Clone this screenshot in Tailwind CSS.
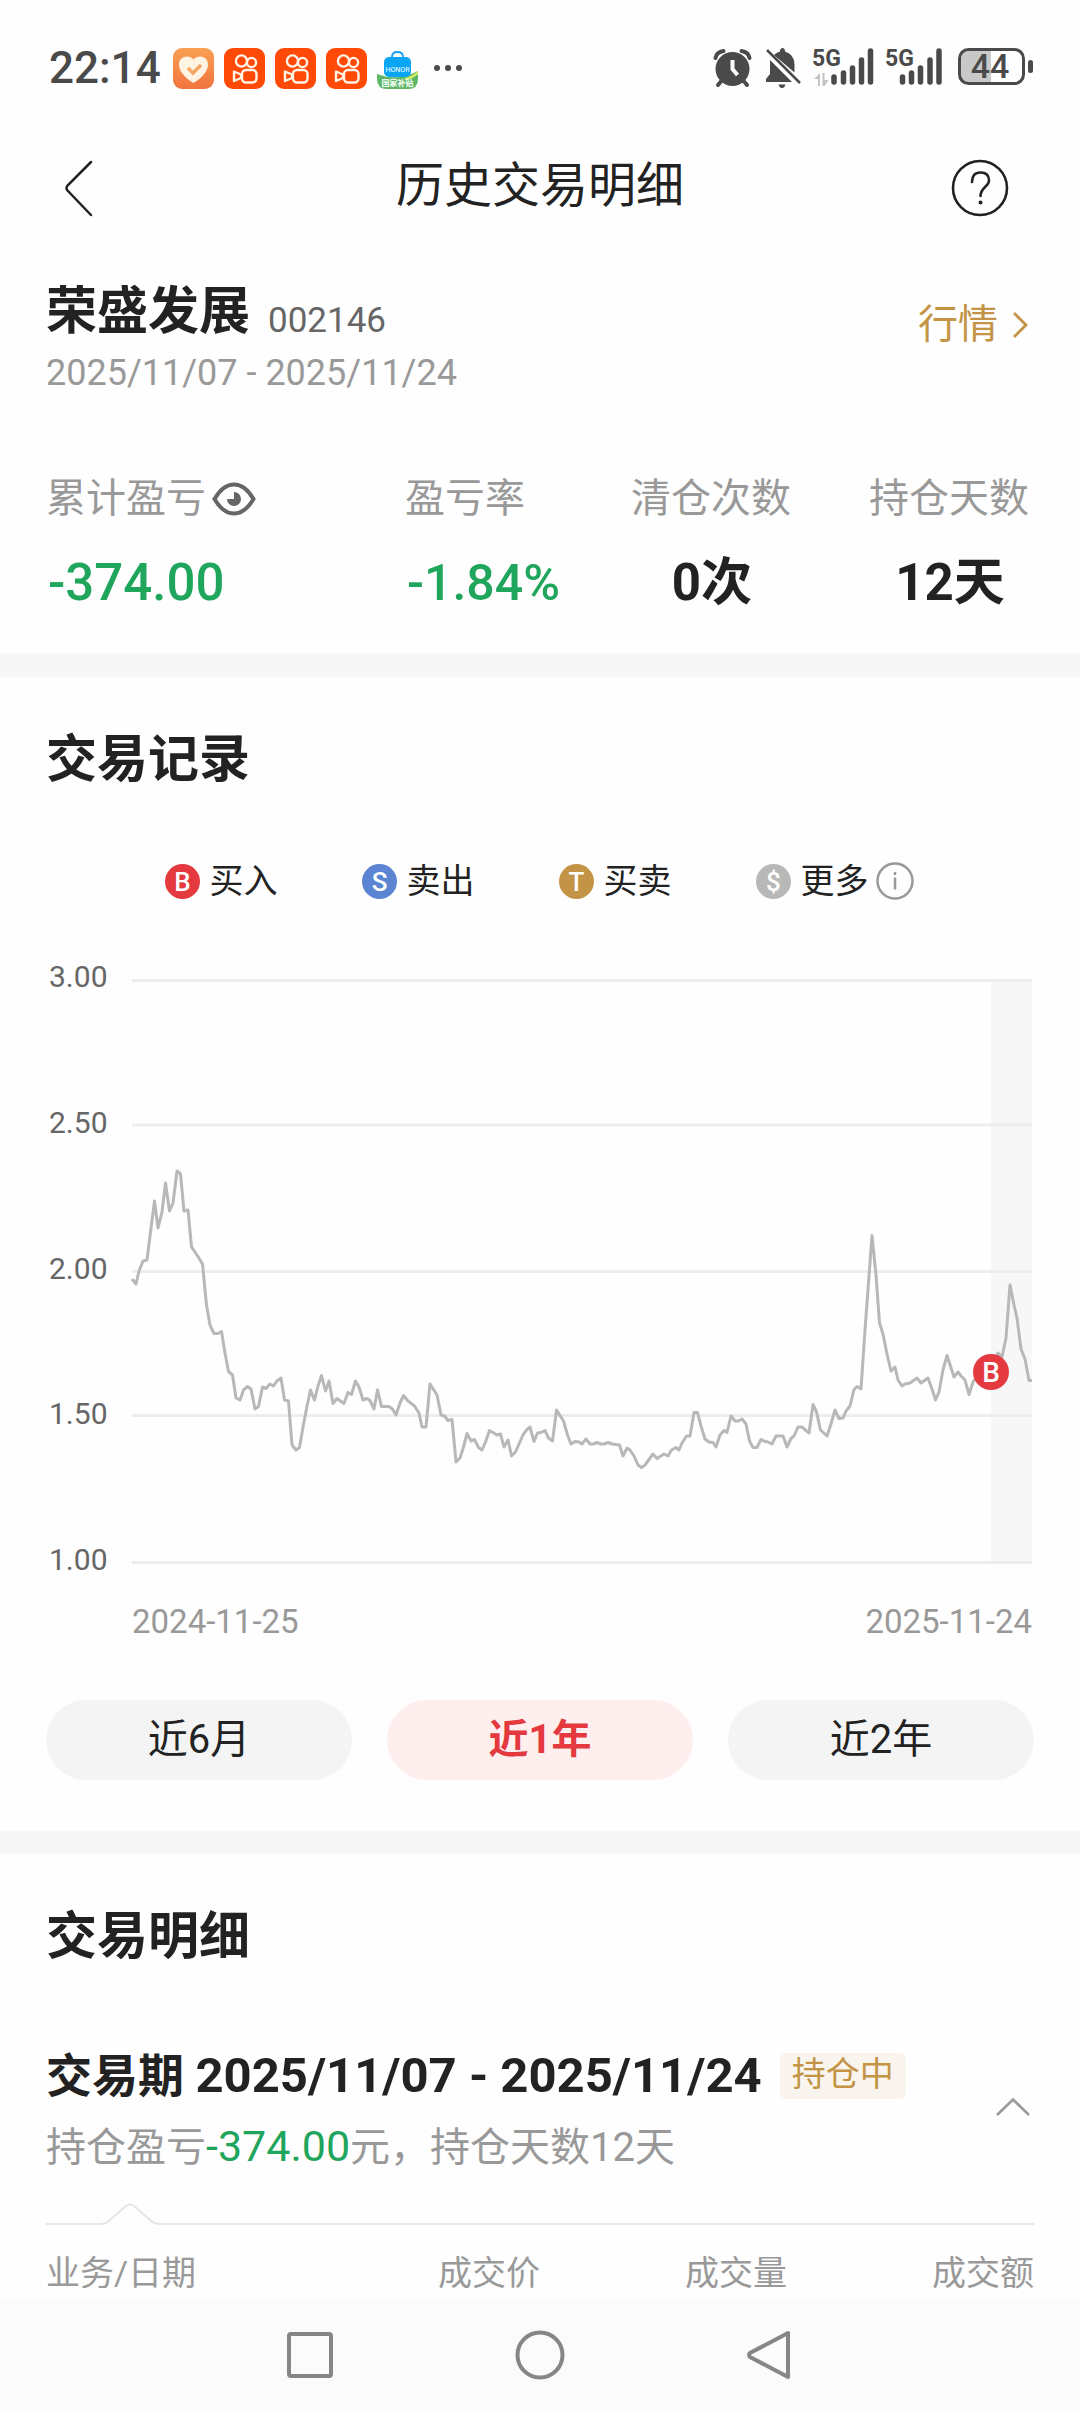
<!DOCTYPE html>
<html lang="zh-CN">
<head>
<meta charset="utf-8">
<meta name="viewport" content="width=device-width, initial-scale=1">
<title>历史交易明细</title>
<script src="https://cdn.jsdelivr.net/npm/@tailwindcss/browser@4"></script>
</head>
<body class="min-h-screen flex flex-col bg-[#fefefe] text-[#222] font-[Roboto,'Noto_Sans_CJK_SC',sans-serif]">

<svg class="hidden">
  <defs>
    <symbol id="camera" viewBox="0 0 41 41">
      <rect width="41" height="41" rx="9" fill="#ff4906"/>
      <g fill="none" stroke="#fff3e6" stroke-width="2.4" stroke-linejoin="round">
        <circle cx="17.500" cy="13" r="5.600"/><circle cx="27.500" cy="14.500" r="4.600"/>
        <rect x="18" y="22" width="14.500" height="12.500" rx="4"/>
        <path d="M10 23.500v9.500l7-3v-3.500z"/>
      </g>
    </symbol>
  </defs>
</svg>

<!-- status bar -->
<div class="flex items-center justify-between h-[136px] pl-[49px] pr-[46px] text-[#4a4a4a]">
  <div class="flex items-center gap-[10px]">
    <span class="text-[44px] leading-[48px] font-medium mr-[2px]">22:14</span>
    <svg class="size-[41px]" viewBox="0 0 41 41">
      <defs><linearGradient id="peach" x2="0" y2="1"><stop stop-color="#f9a052"/><stop offset="1" stop-color="#f1743f"/></linearGradient></defs>
      <rect width="41" height="41" rx="9" fill="url(#peach)"/>
      <path d="M20.500 35C12 30 6 23 6 16.500 6 8 16 6 20.500 11.500 25 6 35 8 35 16.500 35 23 29 30 20.500 35z" fill="#fff3e4"/>
      <path d="M15 20l5 5 8-8" fill="none" stroke="#f4a765" stroke-width="3.500"/>
    </svg>
    <svg class="size-[41px]"><use href="#camera"/></svg>
    <svg class="size-[41px]"><use href="#camera"/></svg>
    <svg class="size-[41px]"><use href="#camera"/></svg>
    <svg class="size-[41px]" viewBox="0 0 41 41">
      <path d="M0 26q20 8 41-3v8q0 10-10 10H10Q0 41 0 31z" fill="#5cb865"/>
      <path d="M28 30q8-2 13-7v3q-5 5-13 6z" fill="#d9ef6a"/>
      <path d="M15 11V9q0-5 5.500-5T26 9v2" fill="none" stroke="#1ba0ea" stroke-width="1.800"/>
      <rect x="7" y="9" width="27" height="20" rx="5" fill="#0aa5f5"/>
      <text x="20.500" y="24" font-size="7" fill="#fff" text-anchor="middle">HONOR</text>
      <text x="20.500" y="38" font-size="8" font-weight="bold" fill="#fff" text-anchor="middle">国家补贴</text>
    </svg>
    <svg class="w-[40px] h-[8px]" viewBox="0 0 40 8" fill="currentColor"><circle cx="9" cy="4" r="3"/><circle cx="20" cy="4" r="3"/><circle cx="31" cy="4" r="3"/></svg>
  </div>
  <svg class="w-[321px] h-[62px]" viewBox="713 38 321 62" fill="currentColor">
    <circle cx="732.500" cy="70" r="17"/>
    <path d="M718 86l5-6M747 86l-5-6" stroke="currentColor" stroke-width="4" stroke-linecap="round"/>
    <path d="M715.500 59q1-6 8-7M749.500 59q-1-6-8-7" fill="none" stroke="currentColor" stroke-width="4" stroke-linecap="round"/>
    <path d="M732.500 61v9l5 6" fill="none" stroke="#fefefe" stroke-width="4"/>
    <path d="M770 61l22 22h-26v-3l4-5zM774 56q3-3 6-3.500 0-3.500 2.500-3.500t2.500 3.500q9.500 3 9.500 13v8zM778.500 85.500h7q-1 3.500-3.500 3.500t-3.500-3.500z"/>
    <path d="M767 51l33 33" stroke="currentColor" stroke-width="2.500"/>
    <text x="812" y="67" font-size="23" font-weight="700">5G</text>
    <path d="M820 74v13h-2V80h-4zM822.500 74v13h2l4-6h-4v-7z" fill="#c4c4c4"/>
    <g stroke="currentColor" stroke-width="5.500" stroke-linecap="round">
      <path d="M834 78v5M843.500 74v9M852.500 69v14M861.500 61v22M870.500 52v31"/>
      <path d="M902.500 78v5M911.500 74v9M920.500 69v14M930 61v22M939 52v31"/>
    </g>
    <text x="885" y="67" font-size="23" font-weight="700">5G</text>
    <path d="M968 52h23v33h-23q-7 0-7-7V59q0-7 7-7z" fill="#c8c8c8"/>
    <rect x="959.500" y="50.500" width="64" height="34" rx="9" fill="none" stroke="currentColor" stroke-width="3"/>
    <rect x="1028" y="61" width="5" height="13" rx="2.500"/>
    <text x="990" y="79" font-size="34" font-weight="500" text-anchor="middle">44</text>
  </svg>
</div>

<!-- title bar -->
<header class="flex items-center justify-between h-[104px] px-[46px]">
  <button class="flex items-center w-[88px] h-[64px] pl-[18px]" aria-label="返回">
    <svg class="w-[30px] h-[58px]" viewBox="0 0 30 58" fill="none" stroke="#222" stroke-width="2.500" stroke-linecap="round"><path d="M27 3L3.500 26.500q-2 2.500 0 5L27 56"/></svg>
  </button>
  <h1 class="text-[48px] leading-[64px] pb-1">历史交易明细</h1>
  <button class="flex items-center justify-end w-[88px] h-[64px] pr-[24px]" aria-label="帮助">
    <svg class="size-[60px]" viewBox="0 0 60 60" fill="none" stroke="#222" stroke-width="2.600" stroke-linecap="round"><circle cx="30" cy="30" r="27"/><path d="M22 24q0-9.500 8.500-9.500T39 22.500c0 6-8.500 7-8.500 15.500"/><circle cx="30.500" cy="44.500" r="2" fill="#222" stroke="none"/></svg>
  </button>
</header>

<!-- stock summary -->
<section class="px-[46px] pt-[38px] pb-[39px]">
  <div class="flex items-center justify-between">
    <div>
      <div class="flex items-end gap-[18px]">
        <h2 class="text-[51px] leading-[68px] font-bold">荣盛发展</h2>
        <span class="text-[35px] leading-[50px] text-[#666]">002146</span>
      </div>
      <p class="text-[36px] leading-[54px] text-[#999]">2025/11/07 - 2025/11/24</p>
    </div>
    <a href="#" class="flex items-center gap-[14px] text-[40px] leading-[56px] text-[#c39445] pr-[6px] pb-[28px]">行情
      <svg class="w-[16px] h-[28px]" viewBox="0 0 16 28" fill="none" stroke="currentColor" stroke-width="2.800"><path d="M2 2l12 12L2 26"/></svg>
    </a>
  </div>
  <dl class="flex justify-between pt-[71px] pr-[5px]">
    <div class="w-[281px]">
      <dt class="flex items-center gap-[6px] text-[40px] leading-[56px] text-[#999]">累计盈亏
        <svg class="w-[44px] h-[34px]" viewBox="0 0 44 34" fill="none" stroke="#666" stroke-width="4"><path d="M2.500 17Q11 2.500 22 2.500T41.500 17Q33 31.500 22 31.500T2.500 17z"/><path d="M22 10v7h-7a7 7 0 1 0 7-7z" fill="#666" stroke="none"/></svg>
      </dt>
      <dd class="pt-[24px] pl-[2px] text-[51px] leading-[64px] font-medium text-[#1fa65c]">-374.00</dd>
    </div>
    <div class="w-[148px]">
      <dt class="text-[40px] leading-[56px] text-[#999]">盈亏率</dt>
      <dd class="pt-[24px] pl-[2px] text-[50px] leading-[64px] font-medium text-[#1fa65c]">-1.84%</dd>
    </div>
    <div class="text-center">
      <dt class="text-[40px] leading-[56px] text-[#999]">清仓次数</dt>
      <dd class="pt-[24px] pl-[2px] text-[51px] leading-[64px] font-bold">0次</dd>
    </div>
    <div class="text-center">
      <dt class="text-[40px] leading-[56px] text-[#999]">持仓天数</dt>
      <dd class="pt-[24px] pl-[2px] text-[51px] leading-[64px] font-bold">12天</dd>
    </div>
  </dl>
</section>

<div class="h-[23px] bg-[#f7f7f7]"></div>

<!-- trade record chart -->
<section class="px-[46px] pt-[49px] pb-[51px]">
  <h2 class="text-[51px] leading-[68px] font-bold">交易记录</h2>
  <ul class="flex justify-center gap-[84px] pt-[62px] pr-[2px] text-[34px] leading-[50px]">
    <li class="flex items-center gap-[10px]"><svg class="size-[35px]" viewBox="0 0 35 35"><circle cx="17.500" cy="17.500" r="17.500" fill="#e3393f"/><text x="17.500" y="27" font-size="26" font-weight="500" fill="#fff" text-anchor="middle">B</text></svg>买入</li>
    <li class="flex items-center gap-[10px]"><svg class="size-[35px]" viewBox="0 0 35 35"><circle cx="17.500" cy="17.500" r="17.500" fill="#5b84d3"/><text x="17.500" y="27" font-size="26" font-weight="500" fill="#fff" text-anchor="middle">S</text></svg>卖出</li>
    <li class="flex items-center gap-[10px]"><svg class="size-[35px]" viewBox="0 0 35 35"><circle cx="17.500" cy="17.500" r="17.500" fill="#c39445"/><text x="17.500" y="27" font-size="26" font-weight="500" fill="#fff" text-anchor="middle">T</text></svg>买卖</li>
    <li class="flex items-center gap-[10px]"><svg class="size-[35px]" viewBox="0 0 35 35"><circle cx="17.500" cy="17.500" r="17.500" fill="#b8b8b8"/><text x="17.500" y="27" font-size="26" font-weight="500" fill="#fff" text-anchor="middle">$</text></svg><span class="flex items-center gap-[7px]">更多
      <svg class="size-[38px]" viewBox="0 0 38 38" fill="none" stroke="#999" stroke-width="2.500"><circle cx="19" cy="19" r="17.500"/><path d="M19 15.500v12M19 10v3"/></svg></span></li>
  </ul>
  <div class="flex justify-between gap-[12px] pt-[53px] pr-[1px]">
    <div class="flex flex-col justify-between text-[30px] leading-[36px] text-[#666] pl-[3px] -mb-[14px]">
      <span>3.00</span><span>2.50</span><span>2.00</span><span>1.50</span><span>1.00</span>
    </div>
    <svg class="w-[902px] mt-[20px]" viewBox="131 979 902 585" fill="none">
      <rect x="991" y="981" width="41" height="581" fill="#f7f7f7"/>
      <path d="M132 980.500h900M132 1125h900M132 1271.500h900M132 1415.500h900M132 1562.500h900" stroke="#ededed" stroke-width="3"/>
      <polyline stroke="#b8b8b8" stroke-width="3" stroke-linejoin="round" points="132,1279 136,1284 139,1271 143,1261 147,1260 150,1236 154.500,1201 158,1228 162,1212 165.500,1183 169.500,1211 173,1203 177,1171 180.500,1174 184,1211 188,1210 191.500,1247 197,1255 202.500,1264 206.500,1305 210,1325 214,1333.500 218,1333.500 221.500,1331.500 225,1353 228.500,1371.500 232.500,1375 236,1398 240,1400 243.500,1390 247.500,1386.500 251,1389 255,1409 258.500,1406.500 262.500,1387 266,1388.500 270,1384 273.500,1386 277,1381 281,1378 284.500,1400 288.500,1401 292,1445 296,1450 299.500,1447.500 303,1427 307,1406 310.500,1390 314.500,1400 318,1386 321.500,1375.500 325.500,1391 329,1381 333,1403.500 337,1398.500 344,1403.500 348,1392.500 351.500,1394.500 355.500,1381 359,1387 363,1400 367,1398.500 370,1400.500 374,1409 377.500,1390 381.500,1406.500 389,1406.500 392.500,1409 396,1415 400,1403 403.500,1395.500 408,1401 414.500,1406 419,1413 422,1427 426,1427 430,1384 437,1395 441,1415 444.500,1416 448,1420.500 452,1419.500 456,1462 460,1458 463.500,1447 467,1433.500 471,1441 474.500,1439.500 478.500,1447.500 482,1450 485.500,1442 489.500,1430.500 497,1435 500.500,1434 504,1447 508,1440 511.500,1456 515.500,1452 523,1435 526.500,1430 530,1427 534,1441.500 537.500,1433 541,1432.500 545,1430.500 548.500,1438 552.500,1441 556.500,1410 563.500,1421 567.500,1435 571,1444 575,1441.500 579,1442 582,1444 586,1439 590,1444 593.500,1444 597,1442.500 601,1444 604,1444 608,1442.500 612,1444 619.500,1445 623,1456 627,1448 630,1450 634,1456 638,1465 641.500,1467.500 645,1465 653,1454 657,1458.500 664,1454 668,1456 671.500,1450 676,1447.500 679,1450 682,1443 686.500,1436 690,1436 694,1412.500 697.500,1412.500 701,1426 705,1439 709,1442 713,1442.500 716,1447 720,1435 724,1430.500 727,1432.500 731,1416 735,1421 738.500,1421 742,1419 746,1424 749.500,1441 753,1447.500 757,1447.500 761,1439.500 765,1441.500 768,1442 772,1444 776,1436 783,1436 787,1447 791,1438.500 794,1436 798,1427 802,1427 809,1433 813,1404.500 816.500,1412 820.500,1430 827,1436 831,1424 835,1410 839,1418.500 843,1418 846,1411 850,1406 854,1389.500 857,1386.500 861,1389 865,1330 872,1235.500 876,1275 879.500,1323 883,1334 887,1354 891,1371 895,1367 898,1380 902,1386 905,1384 910,1383 917,1378 921,1383 928,1378 932,1389 935.500,1400 939,1392 943,1370 947,1355.500 954,1377 958,1372 961,1376 965,1380 969,1394.500 973,1382 977,1377 984,1374 991,1368 998,1353 1002,1357 1006,1338 1010,1285 1014,1305 1017,1318 1021,1349 1025,1359 1029,1380.500 1032,1380.500"/>
      <circle cx="991" cy="1372" r="18" fill="#e3393f"/>
      <text x="991" y="1382" font-size="28" font-weight="500" fill="#fff" text-anchor="middle">B</text>
    </svg>
  </div>
  <div class="flex justify-between pl-[86px] pr-[2px] pt-[36px] text-[33px] leading-[44px] text-[#999]"><span>2024-11-25</span><span>2025-11-24</span></div>
  <div class="grid grid-cols-3 gap-[35px] pt-[56px] text-[40px] leading-[56px]">
    <button class="h-[80px] rounded-full bg-[#f4f4f4]">近6月</button>
    <button class="h-[80px] rounded-full bg-[#feeeee] text-[#e3393f] font-bold">近1年</button>
    <button class="h-[80px] rounded-full bg-[#f4f4f4]">近2年</button>
  </div>
</section>

<div class="h-[23px] bg-[#f7f7f7]"></div>

<!-- trade details -->
<section class="px-[46px] pt-[49px]">
  <h2 class="text-[51px] leading-[68px] font-bold">交易明细</h2>
  <div class="flex items-center justify-between pt-[73px]">
    <div>
      <div class="flex items-center gap-[18px]">
        <h3 class="text-[46px] leading-[64px] font-bold">交易期 <span class="text-[49px]">2025/11/07 - 2025/11/24</span></h3>
        <span class="rounded-md bg-[#f9f5ee] px-[12px] pb-[4px] text-[34px] leading-[42px] text-[#c39445]">持仓中</span>
      </div>
      <p class="pt-[10px] text-[40px] leading-[56px] text-[#999]">持仓盈亏<span class="text-[43px] text-[#1fa65c]">-374.00</span>元，持仓天数12天</p>
    </div>
    <button class="px-[3px] pb-[6px]" aria-label="收起"><svg class="w-[36px] h-[20px]" viewBox="0 0 36 20" fill="none" stroke="#999" stroke-width="2.600"><path d="M2 18L18 2.500 34 18"/></svg></button>
  </div>
  <div class="flex items-end pt-[27px]">
    <div class="w-[54px] h-[2px] bg-[#e8e8e8]"></div>
    <svg class="w-[60px] h-[22px]" viewBox="0 0 60 22" fill="none" stroke="#e5e5e5" stroke-width="2"><path d="M0 21q6 0 10-4L26 3q4-3 8 0l16 14q4 4 10 4"/></svg>
    <div class="flex-1 h-[2px] bg-[#e8e8e8]"></div>
  </div>
  <table class="w-full table-fixed text-[34px] leading-[44px] text-[#999]">
    <thead><tr>
      <th class="w-[27%] pt-[26px] text-left font-normal">业务/日期</th>
      <th class="w-[23%] pt-[26px] text-right font-normal">成交价</th>
      <th class="w-[25%] pt-[26px] text-right font-normal">成交量</th>
      <th class="w-[25%] pt-[26px] text-right font-normal">成交额</th>
    </tr></thead>
  </table>
</section>

<!-- system navigation -->
<nav class="mt-auto flex items-center justify-center gap-[180px] h-[114px] bg-[#fbfbfb]">
  <button aria-label="最近任务"><svg class="size-[50px]" viewBox="0 0 50 50" fill="none" stroke="#868686" stroke-width="4"><rect x="4" y="4" width="42" height="42" rx="2"/></svg></button>
  <button aria-label="主屏幕"><svg class="size-[50px]" viewBox="0 0 50 50" fill="none" stroke="#868686" stroke-width="4"><circle cx="25" cy="25" r="22.500"/></svg></button>
  <button aria-label="返回"><svg class="size-[50px]" viewBox="0 0 50 50" fill="none" stroke="#868686" stroke-width="4" stroke-linejoin="round"><path d="M43 3v44L5 27q-2-2 0-4z"/></svg></button>
</nav>
</body>
</html>
